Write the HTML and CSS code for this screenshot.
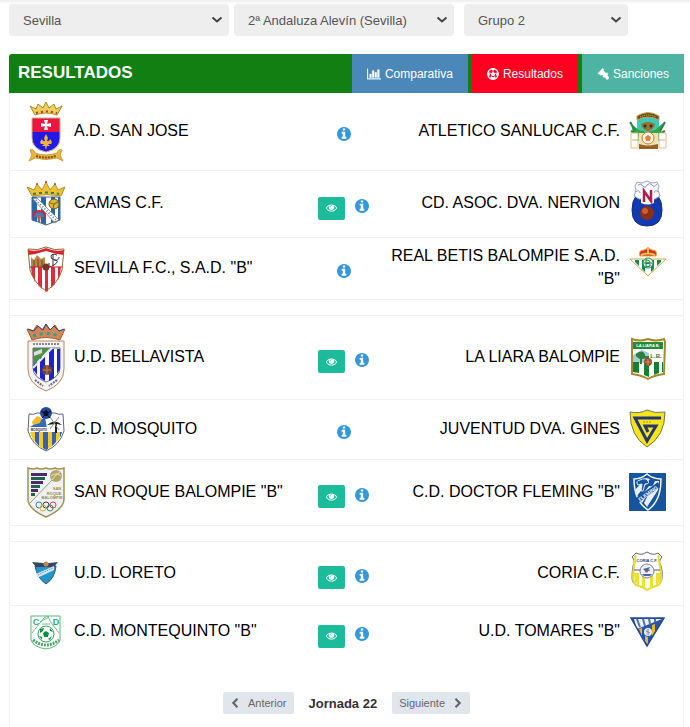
FILE: index.html
```
<!DOCTYPE html>
<html lang="es">
<head>
    <meta charset="UTF-8">
    <meta name="viewport" content="width=device-width, initial-scale=1.0">
    <title>Resultados</title>
    <link rel="stylesheet" href="styles.css">
</head>
<body>

    <!-- Shared icons -->
    <svg class="sprite" aria-hidden="true">
        <symbol id="info" viewBox="128 128 1536 1536"><path d="M1152 1376v-160q0-14-9-23t-23-9h-96V672q0-14-9-23t-23-9H672q-14 0-23 9t-9 23v160q0 14 9 23t23 9h96v320h-96q-14 0-23 9t-9 23v160q0 14 9 23t23 9h448q14 0 23-9t9-23zm-128-896V320q0-14-9-23t-23-9H800q-14 0-23 9t-9 23v160q0 14 9 23t23 9h192q14 0 23-9t9-23zm640 416q0 209-103 385.500T1281.500 1561 896 1664t-385.500-103T231 1281.500 128 896t103-385.500T510.500 231 896 128t385.500 103T1561 510.500 1664 896z"/></symbol>
        <symbol id="eye" viewBox="0 384 1792 1152"><path d="M1664 960q-152-236-381-353 61 104 61 225 0 185-131.500 316.500T896 1280t-316.500-131.500T448 832q0-121 61-225-229 117-381 353 133 205 333.500 326.500T896 1408t434.500-121.500T1664 960zM944 576q0-20-14-34t-34-14q-125 0-214.500 89.500T592 832q0 20 14 34t34 14 34-14 14-34q0-86 61-147t147-61q20 0 34-14t14-34zm848 384q0 34-20 69-140 230-376.500 368.500T896 1536t-499.500-139T20 1029Q0 994 0 960t20-69q140-229 376.500-368T896 384t499.500 139T1772 891q20 35 20 69z"/></symbol>
        <symbol id="chart" viewBox="0 128 2048 1536"><path d="M640 896v512H384V896h256zm384-512v1024H768V384h256zm1024 1152v128H0V128h128v1408h1920zm-640-896v768h-256V640h256zm384-384v1152h-256V256h256z" stroke="currentColor" stroke-width="50"/></symbol>
        <symbol id="ball" viewBox="0 0 24 24"><circle cx="12" cy="12" r="10.500" fill="none" stroke="currentColor" stroke-width="2.600"/><path d="M12 7.500l4.500 3.300-1.700 5.200H9.200l-1.700-5.200zM7 2l5 3 5-3-5-1zM1 9l4 1 1 5-4 1zM23 9l-4 1-1 5 4 1zM7 22l1-4h8l1 4-5 1z"/><path d="M12 4v4M16 11l4-1.500M14.500 16l2.500 3.500M9.500 16L7 19.500M8 11L4 9.500" stroke="currentColor" stroke-width="1.500"/></symbol>
        <symbol id="gavel" viewBox="0 0 24 24"><path d="M11 0l3 3-1 2 5 5 2-1 3 3-9 8-3-3 1-2-1-1-3 1-7-4 3-3 3-3zM13 14l4-4 7 8q1 2-1 4t-4 1z"/></symbol>
        <symbol id="prev" viewBox="0 0 10 12"><path d="M8 1L3 6l5 5" fill="none" stroke="currentColor" stroke-width="2.600"/></symbol>
        <symbol id="next" viewBox="0 0 10 12"><path d="M2 1l5 5-5 5" fill="none" stroke="currentColor" stroke-width="2.600"/></symbol>
    </svg>

    <form class="filters">
        <select class="filter" name="provincia" aria-label="Provincia">
            <option>Sevilla</option>
        </select>
        <select class="filter" name="categoria" aria-label="Categoría">
            <option>2ª Andaluza Alevín (Sevilla)</option>
        </select>
        <select class="filter filter-group" name="grupo" aria-label="Grupo">
            <option>Grupo 2</option>
        </select>
    </form>

    <section class="panel">
        <header class="panel-header">
            <h2>RESULTADOS</h2>
            <nav class="tabs">
                <a href="#comparativa" class="tab tab-compare"><svg class="tab-icon tab-icon-chart"><use href="#chart"/></svg>Comparativa</a>
                <a href="#resultados" class="tab tab-results"><svg class="tab-icon"><use href="#ball"/></svg>Resultados</a>
                <a href="#sanciones" class="tab tab-sanctions"><svg class="tab-icon"><use href="#gavel"/></svg>Sanciones</a>
            </nav>
        </header>

        <table class="results">
            <colgroup>
                <col class="col-crest">
                <col class="col-home">
                <col class="col-actions">
                <col>
                <col class="col-crest-away">
            </colgroup>
            <tbody>
                <tr>
                    <td class="crest">
                        <svg width="40" height="63" viewBox="0 0 40 63">
                            <path d="M9 15L4 6l6 3 2-5 5 4 3-6 3 6 5-4 2 5 6-3-5 9q-11-4-22 0z" fill="#ecd05a" stroke="#b08a1d"/>
                            <path d="M10 13q10-3 21 0" stroke="#b3352c" stroke-width="2" stroke-dasharray="2 3" fill="none"/>
                            <path d="M6 18h28v14H6z" fill="#ee1340"/>
                            <path d="M6 32h28v6q0 11-14 14Q6 49 6 38z" fill="#2418e8"/>
                            <path d="M6 18h28v20q0 11-14 14Q6 49 6 38z" fill="none" stroke="#c9b184"/>
                            <path d="M18 20h4l-1 4 4-1v4l-4-1 1 4h-4l1-4-4 1v-4l4 1z" fill="#fff"/>
                            <path d="M20 34l2 4-1 3q3 0 3-2 3 3 1 5h-3l2 2h-3l-1 4-1-4h-3l2-2h-3q-2-2 1-5 0 2 3 2l-1-3z" fill="#e8b73a"/>
                            <path d="M4 50q3-2 5 3 11 4 22 0 2-5 5-3l-2 5 3 6-6-3q-11 3-22 0l-6 3 3-6z" fill="#eab53c" stroke="#d59a35"/>
                            <path d="M10 56q10 3 20 0" stroke="#7b5513" stroke-width="2" stroke-dasharray="2 1" fill="none"/>
                        </svg>
                    </td>
                    <td class="home">A.D. SAN JOSE</td>
                    <td class="actions"><div class="buttons"><button class="info" type="button" aria-label="Información"><svg><use href="#info"/></svg></button></div></td>
                    <td class="away">ATLETICO SANLUCAR C.F.</td>
                    <td class="crest">
                        <svg width="40" height="63" viewBox="0 0 40 63">
                            <path d="M9 19q10-9 22 0v22H9z" fill="#3ec9b8"/>
                            <path d="M9 20V16q11-7 22 0v4q-11-6-22 0z" fill="#5c4b25" stroke="#d5a63d"/>
                            <path d="M12 17q8-4 16 0" stroke="#e7d28c" stroke-dasharray="1 1" fill="none"/>
                            <path d="M3 24l8 6 8 2 8-2 8-7-2 9-6 5H12l-7-4z" fill="#36a544"/>
                            <path d="M2 22l5 8M37 22l-5 9M3 31l6 3M37 31l-6 3" stroke="#1f863c" stroke-width="2"/>
                            <path d="M13 24q7-4 14 0-1 6-7 7-6-1-7-7z" fill="#977033"/>
                            <circle cx="17" cy="26" r="1.500" fill="#32331b"/><circle cx="23" cy="26" r="1.500" fill="#32331b"/>
                            <path d="M3 33h7v15H3zM31 33h7v15h-7z" fill="#fff" stroke="#dfbd82"/>
                            <path d="M4 40h6M31 40h6" stroke="#e0ac59"/>
                            <path d="M11 33h19v13H11z" fill="#f8e1ad"/>
                            <circle cx="20" cy="38" r="6" fill="#fff8ea" stroke="#d9772b"/>
                            <path d="M20 35l3 2-1 4h-4l-1-4z" fill="#df8239"/>
                            <path d="M11 44l4 1q5 1 10 0l5-1v5H11z" fill="#96602b"/>
                        </svg>
                    </td>
                </tr>
                <tr>
                    <td class="crest">
                        <svg width="40" height="52" viewBox="0 0 40 52">
                            <path d="M6 18L1 9l7 3 3-6 5 6 4-8 4 8 5-6 3 6 7-3-4 9q-14-3-29 0z" fill="#edc335" stroke="#bd8925"/>
                            <path d="M7 16q13-3 26 0" stroke="#35794c" stroke-width="2" stroke-dasharray="3 3" fill="none"/>
                            <circle cx="20" cy="4" r="1" fill="#c6352c"/><circle cx="11" cy="6" r="1" fill="#c6352c"/><circle cx="29" cy="6" r="1" fill="#c6352c"/>
                            <path d="M6 19h28v23q-6 2-14 5-7-3-14-5z" fill="#fff"/>
                            <path d="M6 19h5v25l-5-2zM15 19h5v28l-5-2zM25 19h4v25l-4 1zM32 19h2v23l-2 1z" fill="#2468ad"/>
                            <circle cx="28" cy="26" r="5" fill="#e0b630" stroke="#71571c"/>
                            <path d="M24 25l4 1 4-2M28 26l-1 5" stroke="#7e641f" fill="none"/>
                            <path d="M7 21l4-1 22 22-4 3z" fill="#fff" stroke="#8d97a6"/>
                            <path d="M10 22l20 20" stroke="#6f7685" stroke-width="2" stroke-dasharray="1 2"/>
                            <path d="M7 39q1-6 6-6t6 6" stroke="#cd2435" stroke-width="2" fill="#5675ac"/>
                            <path d="M11 38h4l-1 6h-2z" fill="#b46338"/>
                            <path d="M6 19h28v23q-6 2-14 5-7-3-14-5z" fill="none" stroke="#4b6788"/>
                        </svg>
                    </td>
                    <td class="home">CAMAS C.F.</td>
                    <td class="actions"><div class="buttons"><button class="view" type="button" aria-label="Ver"><svg><use href="#eye"/></svg></button><button class="info" type="button" aria-label="Información"><svg><use href="#info"/></svg></button></div></td>
                    <td class="away">CD. ASOC. DVA. NERVION</td>
                    <td class="crest">
                        <svg width="40" height="52" viewBox="0 0 40 52">
                            <path d="M8 18Q4 23 4 32q0 16 15 16t15-16q0-9-4-14z" fill="#1039b4" stroke="#152e74"/>
                            <path d="M9 4l5 1 5-2 5 2 5-1 2 4-1 4 2 6-5 3H11l-5-3 2-6-1-4z" fill="#f5f7f9" stroke="#9aa7b8"/>
                            <path d="M10 7q3-2 5 1t4-1q3-3 5 0t5-1M8 14q3-3 4 1M30 14q-3-3-4 1" stroke="#909caf" fill="none"/>
                            <path d="M13 12h13v13q-6 3-13 0z" fill="#fff"/>
                            <path d="M16 24V13l7 10V12" fill="none" stroke="#b21c49" stroke-width="2.500"/>
                            <circle cx="19" cy="35" r="7" fill="#8b2f17"/><circle cx="17" cy="33" r="3" fill="#ca6034"/>
                        </svg>
                    </td>
                </tr>
                <tr>
                    <td class="crest">
                        <svg width="40" height="46" viewBox="0 0 40 46">
                            <path d="M2 4q10 2 18-2 8 4 18 2l-2 20q-4 14-16 22Q8 38 4 24z" fill="#fff"/>
                            <path d="M2 4q10 2 18-2 8 4 18 2v5q-9-1-18-4Q11 8 2 9z" fill="#d92234"/>
                            <path d="M5 21h4v15l-3-7zM12 21h4v22l-4-4zM19 21h3v24l-2 1-1-1zM25 21h4v17l-4 4zM32 21h3l-1 8-2 5z" fill="#e22a3c"/>
                            <path d="M5 11l3 3 3-5 4 4 4-2v10H5z" fill="#b88447"/>
                            <path d="M8 14v7M12 13v8M16 14v7" stroke="#71402b"/>
                            <path d="M31 9q-5-2-6 1t4 4-1 5-5-2M27 8v12M33 11q0 4-5 3" stroke="#333" fill="none"/>
                            <path d="M4 21h32" stroke="#a82d29"/>
                            <circle cx="20" cy="21" r="3.500" fill="#76351e"/>
                            <path d="M2 3q10 2 18-2 8 4 18 2l-2 21q-4 13-16 21Q8 37 4 24z" fill="none" stroke="#98672e"/>
                        </svg>
                    </td>
                    <td class="home">SEVILLA F.C., S.A.D. "B"</td>
                    <td class="actions"><div class="buttons"><button class="info" type="button" aria-label="Información"><svg><use href="#info"/></svg></button></div></td>
                    <td class="away">REAL BETIS BALOMPIE S.A.D. "B"</td>
                    <td class="crest">
                        <svg width="40" height="46" viewBox="0 0 40 46">
                            <path d="M12 10q-2-6 4-6l4-2 4 2q6 0 4 6z" fill="#db2f33" stroke="#daa43a"/>
                            <path d="M13 9q7-3 14 0M20 1v6" stroke="#eec348" stroke-width="2" fill="none"/>
                            <path d="M2 13h36L20 30z" fill="#fff" stroke="#d6a647"/>
                            <path d="M7 14h4v6l-4-4zM14 14h3v12l-3-3zM23 14h3v9l-3 3zM29 14h4v2l-4 4z" fill="#168a4b"/>
                            <circle cx="20" cy="17" r="5" fill="#e8f5ec" stroke="#1b8a4c"/>
                            <path d="M18 13v8M18 14q4 0 4 2t-4 1q5 0 4 3l-4 1M16 17h8" stroke="#12824a" fill="none"/>
                        </svg>
                    </td>
                </tr>
                <tr class="spacer"><td colspan="5"></td></tr>
                <tr>
                    <td class="crest">
                        <svg width="40" height="69" viewBox="0 0 40 69">
                            <path d="M6 17L1 6l6 2 4-6 5 5 4-6 4 6 5-5 4 6 6-2-5 11q-14-5-28 0z" fill="#cf8755" stroke="#a35e35"/>
                            <path d="M2 6l6 2 4-5 5 4 3-6 4 6 4-4 5 5 5-2" stroke="#3c427d" fill="none"/>
                            <path d="M7 13q13-5 26 0" stroke="#27a29a" stroke-width="3" stroke-dasharray="3 4" fill="none"/>
                            <path d="M2 18h36v28q0 15-18 22Q2 61 2 46z" fill="#f3f3f6" stroke="#c18558"/>
                            <path d="M7 21h26" stroke="#8a8494" stroke-width="2" stroke-dasharray="2 1"/>
                            <path d="M7 25h27v20q0 9-14 14Q7 54 7 45z" fill="#fff" stroke="#656d80"/>
                            <path d="M7 38h4v14l-4-6zM14 34h5v24l-5-3zM23 26h5v29l-5 3zM31 26h3v20l-3 5z" fill="#2020d6"/>
                            <path d="M7 25h17L7 43z" fill="#4f8d4d"/>
                            <path d="M8 29l8-3v4l-8 3z" fill="#dcdde2"/>
                            <path d="M26 25L7 45" stroke="#ecebe4" stroke-width="2"/>
                            <circle cx="21" cy="47" r="5" fill="#74462d"/><path d="M17 47h8M21 42v10" stroke="#b78354"/>
                            <path d="M9 57l8 6M31 57l-8 6" stroke="#696775" stroke-width="2" stroke-dasharray="2 1"/>
                        </svg>
                    </td>
                    <td class="home">U.D. BELLAVISTA</td>
                    <td class="actions"><div class="buttons"><button class="view" type="button" aria-label="Ver"><svg><use href="#eye"/></svg></button><button class="info" type="button" aria-label="Información"><svg><use href="#info"/></svg></button></div></td>
                    <td class="away">LA LIARA BALOMPIE</td>
                    <td class="crest">
                        <svg width="40" height="69" viewBox="0 0 40 69">
                            <path d="M4 16q8 3 16 0 8 3 16 0l1 3-1 32q-9 1-16 5-7-4-16-5z" fill="#fff" stroke="#a68a2b" stroke-width="2"/>
                            <path d="M5 19h30v7H5z" fill="#258b38"/>
                            <text x="20" y="24" class="crest-text" fill="#fff">LA LIARA B.</text>
                            <path d="M5 26h30v14H5z" fill="#fff"/>
                            <path d="M5 32l9-5 7 3v10H5z" fill="#a9cbd9"/>
                            <path d="M10 35q-5-4 1-6 5-2 6 3 2 4-3 4v5h-2v-5zM17 33h4v7h-4z" fill="#298243"/>
                            <text x="28" y="35" class="crest-text crest-text-lg" fill="#198044">L.B.</text>
                            <path d="M5 39h6v11l-6-1zM16 39h5v15l-5-2zM26 39h5v11l-5 2zM34 39h1v10h-1z" fill="#17802e"/>
                            <circle cx="20" cy="39" r="4" fill="#96512c"/><path d="M17 39h6M20 36v6" stroke="#d09457"/>
                        </svg>
                    </td>
                </tr>
                <tr>
                    <td class="crest">
                        <svg width="40" height="45" viewBox="0 0 40 45">
                            <path d="M3 7q5 1 8-1h18q3 2 8 1l1 17q-4 14-18 20Q6 38 2 24z" fill="#fff" stroke="#566480"/>
                            <path d="M4 25h32q-4 12-16 18Q7 37 4 25z" fill="#f2cc24"/>
                            <path d="M9 25h4v14l-4-5zM17 25h5v17l-2 1-3-2zM26 25h4v10l-4 4zM34 25h2l-2 6z" fill="#3760b2"/>
                            <path d="M4 20l15-10 2 12H4z" fill="#326ac2"/>
                            <path d="M6 15l5-6 5 2-2 5-7 2z" fill="#efbd25"/>
                            <path d="M21 18q8-7 15 0l-5-1v9h-2v-9z" fill="#1b1b22"/>
                            <path d="M24 10l9 13M33 10l-9 12" stroke="#8d8d96"/>
                            <path d="M4 20h18v5H4z" fill="#fff"/><text x="13" y="24" class="crest-text crest-text-sm" fill="#222">MOSQUITO</text>
                            <circle cx="20" cy="6" r="6" fill="#2549a5"/><path d="M20 3l3 2-1 4h-4l-1-4z" fill="#10131e"/>
                            <path d="M15 4l2 1M25 4l-2 1M18 9l-2 2M22 9l2 2" stroke="#10131e"/>
                        </svg>
                    </td>
                    <td class="home">C.D. MOSQUITO</td>
                    <td class="actions"><div class="buttons"><button class="info" type="button" aria-label="Información"><svg><use href="#info"/></svg></button></div></td>
                    <td class="away">JUVENTUD DVA. GINES</td>
                    <td class="crest">
                        <svg width="40" height="45" viewBox="0 0 40 45">
                            <path d="M2 5q10 2 17-2 8 4 18 2 0 24-18 35Q2 29 2 5z" fill="#f5e51d" stroke="#737449"/>
                            <path d="M33 11H7l12 23 9-15H17l3 6" fill="none" stroke="#26366f" stroke-width="3"/>
                            <path d="M15 15h8" stroke="#a5983a" stroke-dasharray="2 1"/>
                        </svg>
                    </td>
                </tr>
                <tr>
                    <td class="crest">
                        <svg width="40" height="51" viewBox="0 0 40 51">
                            <path d="M2 1q5 2 9 0 4 2 9 0 4 2 9 0 4 2 9 0v31q0 10-18 18Q2 42 2 32z" fill="#edf1f4" stroke="#9f9451" stroke-width="1.500"/>
                            <path d="M5 6h16v3H5zM5 14h12v3H5zM5 22h7v3H5z" fill="#4a2b68"/>
                            <path d="M5 10h14v3H5zM5 18h9v3H5zM5 26h4v3H5z" fill="#23604e"/>
                            <path d="M4 36L28 11" stroke="#a99b58"/>
                            <circle cx="30" cy="9" r="6" fill="#b3a568"/><path d="M25 9q5-4 10 0M26 13q3-5 8-8" stroke="#ebe4c4" fill="none"/>
                            <text x="31" y="23" class="crest-text" fill="#9a8c40">SAN</text>
                            <text x="28" y="28" class="crest-text" fill="#9a8c40">ROQUE</text>
                            <text x="26" y="32" class="crest-text" fill="#9a8c40">BALOMPIE</text>
                            <g fill="none"><circle cx="13" cy="38" r="3" stroke="#3689b6"/><circle cx="20" cy="38" r="3" stroke="#3b4148"/><circle cx="27" cy="38" r="3" stroke="#d04355"/><circle cx="17" cy="41" r="3" stroke="#d6b43c"/><circle cx="24" cy="41" r="3" stroke="#39905d"/></g>
                        </svg>
                    </td>
                    <td class="home">SAN ROQUE BALOMPIE "B"</td>
                    <td class="actions"><div class="buttons"><button class="view" type="button" aria-label="Ver"><svg><use href="#eye"/></svg></button><button class="info" type="button" aria-label="Información"><svg><use href="#info"/></svg></button></div></td>
                    <td class="away">C.D. DOCTOR FLEMING "B"</td>
                    <td class="crest">
                        <svg width="40" height="51" viewBox="0 0 40 51">
                            <path d="M1 6h37v38H1z" fill="#17549f"/>
                            <path d="M6 12q7 0 13-5 6 5 14 5 0 22-13 31Q6 34 6 12z" fill="#17549f" stroke="#f0f6fb" stroke-width="1.500"/>
                            <path d="M18 11l4 1-13 17-2-6zM27 14h4q0 5-1 9L19 40l-3-4zM21 19h4L14 36l-3-4z" fill="#e7f0f7"/>
                            <path d="M10 18q-3-4 2-5 6-3 8 1 2 3-3 3l-2 7h-2l1-7z" fill="#17549f" stroke="#e7f0f7"/>
                            <path d="M8 31L30 15l2 5-22 16z" fill="#17549f"/>
                            <text class="crest-text crest-text-md" fill="#fff" transform="translate(21 28) rotate(-36)">FLEMING</text>
                        </svg>
                    </td>
                </tr>
                <tr class="spacer"><td colspan="5"></td></tr>
                <tr>
                    <td class="crest">
                        <svg width="40" height="49" viewBox="0 0 40 49">
                            <path d="M9 17h21q-1 12-10 18Q11 29 9 17z" fill="#2397cb" stroke="#315371"/>
                            <path d="M6 13l11 1h6l9-1-4 5H10z" fill="#374561"/>
                            <path d="M10 25l18-8v4l-17 8z" fill="#dce9f3"/><path d="M12 26l15-7" stroke="#587394" stroke-dasharray="1 1"/>
                            <circle cx="20" cy="15" r="2.500" fill="#c58a4a"/>
                        </svg>
                    </td>
                    <td class="home">U.D. LORETO</td>
                    <td class="actions"><div class="buttons"><button class="view" type="button" aria-label="Ver"><svg><use href="#eye"/></svg></button><button class="info" type="button" aria-label="Información"><svg><use href="#info"/></svg></button></div></td>
                    <td class="away">CORIA C.F.</td>
                    <td class="crest">
                        <svg width="40" height="49" viewBox="0 0 40 49">
                            <path d="M8 4q4 2 7 1l4-2 4 2q4 1 7-1l4 4q-4 4-1 9 2 5 1 12 0 6-6 8-5 1-9 4-4-3-9-4-6-2-6-8 0-7 1-12 3-5-1-9z" fill="#fff" stroke="#65667d"/>
                            <path d="M6 24h5v12l-4-3zM14 26h3v13l-3-1zM22 26h3v12l-3 1zM28 24h5q1 9-5 12z" fill="#ece229"/>
                            <path d="M8 6q-1 2-1 6-2 8-2 17 0 6 6 8 5 1 8 4 4-3 9-4 6-2 5-8 0-9-2-17 0-4-1-6" fill="none" stroke="#e7dc2e" stroke-width="2"/>
                            <text x="19" y="13" class="crest-text" fill="#2f3872">CORIA C.F.</text>
                            <circle cx="19" cy="22" r="7" fill="#edf1f6" stroke="#7d8091"/>
                            <path d="M14 25h10l-2 2h-6zM15 20l7-2-3 6" fill="#416aa6"/><path d="M17 23l5-2" stroke="#c95145"/>
                            <path d="M6 21h6M26 21h6" stroke="#55577c"/>
                        </svg>
                    </td>
                </tr>
                <tr>
                    <td class="crest">
                        <svg width="40" height="38" viewBox="0 0 40 38">
                            <path d="M5 3h29v24q-2 7-14 9Q7 34 5 27z" fill="#fff" stroke="#58b87d"/>
                            <text x="10" y="12" class="crest-text crest-text-xl" fill="#3aab64">C</text>
                            <text x="30" y="12" class="crest-text crest-text-xl" fill="#3aab64">D</text>
                            <path d="M6 20L18 5l4-2 2 5 9 12M14 9l9-5M16 11h8" fill="none" stroke="#72be8d"/>
                            <circle cx="20" cy="21" r="8" fill="#fff" stroke="#36a45e"/>
                            <path d="M20 18l3 2-1 4h-4l-1-4zM14 16l4-1-1 3-3 2zM24 15l3 4-3-1zM13 23l3 1v3zM26 23l-2 4-2-1z" fill="#108c3d"/>
                            <path d="M7 27q13 10 26 0" fill="none" stroke="#48a768" stroke-width="3" stroke-dasharray="2 1"/>
                        </svg>
                    </td>
                    <td class="home">C.D. MONTEQUINTO "B"</td>
                    <td class="actions"><div class="buttons"><button class="view" type="button" aria-label="Ver"><svg><use href="#eye"/></svg></button><button class="info" type="button" aria-label="Información"><svg><use href="#info"/></svg></button></div></td>
                    <td class="away">U.D. TOMARES "B"</td>
                    <td class="crest">
                        <svg width="40" height="38" viewBox="0 0 40 38">
                            <path d="M3 5h33L19 33z" fill="#2b55a8"/>
                            <path d="M6 6h28L9 16z" fill="#f0f3f8"/>
                            <path d="M9 6l3 8M15 6l2 7M21 6l1 5M27 6v3" stroke="#4f6fb2" stroke-width="2"/>
                            <path d="M11 16l3-1v9zM24 12l3-1v8l-3 4zM17 23l3 1v8l-3-4z" fill="#e5b629"/>
                            <circle cx="20" cy="19" r="4" fill="#e3e9f1"/><path d="M18 18l4 2M20 16v6" stroke="#7384a4"/>
                            <path d="M3 5h33L19 33z" fill="none" stroke="#2149a0" stroke-width="1.500"/>
                        </svg>
                    </td>
                </tr>
            </tbody>
        </table>

        <footer class="pager">
            <button type="button" class="page-btn"><svg><use href="#prev"/></svg>Anterior</button>
            <strong class="round">Jornada 22</strong>
            <button type="button" class="page-btn">Siguiente<svg><use href="#next"/></svg></button>
        </footer>
    </section>

</body>
</html>
```

FILE: styles.css
```
* {
    box-sizing: border-box;
}

body {
    min-height: 100vh;
    margin: 0;
    padding: 4px 6px 0 9px;
    display: flex;
    flex-direction: column;
    background: linear-gradient(#eee, #fff 4px) no-repeat;
    font-family: "Liberation Sans", Arial, sans-serif;
    color: #000;
}

.sprite {
    display: none;
}

svg {
    display: block;
    fill: currentColor;
}

button {
    border: none;
    padding: 0;
    font-family: inherit;
    cursor: pointer;
}

/* Filters */
.filters {
    display: flex;
    gap: 5px;
    margin-bottom: 18px;
}

.filter {
    appearance: none;
    width: 220px;
    height: 32px;
    padding: 0 14px;
    border: none;
    border-radius: 4px;
    background: #eee url("data:image/svg+xml,%3Csvg xmlns='http://www.w3.org/2000/svg' width='12' height='8'%3E%3Cpath d='M1.500 1.500l4.500 4 4.500-4' fill='none' stroke='%23444' stroke-width='2'/%3E%3C/svg%3E") no-repeat right 6px center;
    font-family: inherit;
    font-size: 13px;
    color: #555;
}

.filter-group {
    width: 164px;
    margin-left: 5px;
}

/* Panel */
.panel {
    flex: 1;
    border: 1px solid #eef1f1;
    border-top: none;
    border-bottom: none;
    border-radius: 4px 4px 0 0;
}

.panel-header {
    display: flex;
    justify-content: space-between;
    height: 39px;
    margin: 0 -1px;
    border-radius: 3px 0 0 0;
    background: #117f11;
}

.panel-header h2 {
    margin: 0;
    padding-left: 9px;
    font-size: 17px;
    line-height: 38px;
    color: #fff;
}

.tabs {
    display: flex;
    gap: 4px;
}

.tab {
    display: flex;
    align-items: center;
    gap: 4px;
    padding: 0 15px;
    font-size: 12px;
    color: #fff;
    text-decoration: none;
}

.tab-compare {
    background: #4b87b9;
}

.tab-results {
    background: #ff0020;
}

.tab-sanctions {
    background: #4eb3a3;
}

.tab-icon {
    width: 12px;
    height: 12px;
}

.tab-icon-chart {
    width: 14px;
}

/* Results */
.results {
    width: 100%;
    table-layout: fixed;
    border-collapse: separate;
    border-spacing: 0;
    font-size: 16px;
    line-height: 23px;
}

.col-crest {
    width: 64px;
}

.col-crest-away {
    width: 63px;
}

.col-home {
    width: 35%;
}

.col-actions {
    width: 68px;
}

.results td {
    padding: 7px 0;
    border-bottom: 1px solid #f0f1f1;
    vertical-align: middle;
}

.results tr:last-child td {
    border-bottom: none;
}

.results .spacer td {
    height: 16px;
    padding: 0;
}

.results .crest:first-child {
    padding-left: 16px;
}

.results .crest:last-child {
    padding-left: 8px;
}

.results .away {
    text-align: right;
}

.results .home,
.results .away {
    padding-top: 6px;
    padding-bottom: 9px;
}

.crest-text {
    font-size: 4px;
    font-weight: bold;
    text-anchor: middle;
}

.crest-text-sm {
    font-size: 3px;
}

.crest-text-md {
    font-size: 5px;
}

.crest-text-lg {
    font-size: 6px;
}

.crest-text-xl {
    font-size: 9px;
}

.buttons {
    display: flex;
    justify-content: center;
    gap: 10px;
    padding-top: 4px;
}

.view {
    display: flex;
    align-items: center;
    justify-content: center;
    width: 27px;
    height: 23px;
    margin-top: 4px;
    border-radius: 2px;
    background: #1cbb9b;
    color: #fff;
}

.view svg {
    width: 11px;
    height: 8px;
}

.info {
    background: none;
    color: #3598dc;
}

.info svg {
    width: 14px;
    height: 14px;
}

/* Pager */
.pager {
    display: flex;
    align-items: center;
    justify-content: center;
    gap: 15px;
    padding-top: 34px;
}

.page-btn {
    display: flex;
    align-items: center;
    gap: 8px;
    height: 22px;
    padding: 0 7px;
    border-radius: 2px;
    background: #e1e5ec;
    font-size: 11px;
    color: #666;
}

.page-btn svg {
    width: 10px;
    height: 10px;
}

.round {
    font-size: 13px;
    color: #333;
}
```
